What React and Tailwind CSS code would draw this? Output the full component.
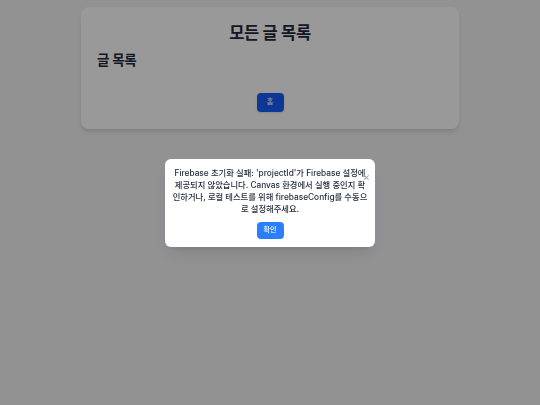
import { useState } from 'react';

const font = { fontFamily: 'Inter, "Noto Sans CJK KR", sans-serif' };

const App = () => {
    const [showError, setShowError] = useState(true);

    return (
        <div className="min-h-screen bg-gray-100 pt-[7px]" style={font}>
            <div className="w-[378px] mx-auto bg-white rounded-lg shadow-md px-[16px] pt-[14px] pb-[17px]">
                <h1 className="text-center text-[16.5px] leading-[24px] font-bold text-gray-800 tracking-[-0.3px]">
                    모든 글 목록
                </h1>
                <h2 className="mt-[5px] text-[13.5px] leading-[20px] font-semibold text-gray-800 tracking-[-0.3px]">
                    글 목록
                </h2>
                <div className="flex justify-center mt-[23px]">
                    <button className="w-[27px] h-[19px] rounded bg-blue-600 text-white text-[7px] font-medium shadow-sm">
                        홈
                    </button>
                </div>
            </div>

            {showError && (
                <div className="fixed inset-0 bg-black/40 flex items-center justify-center">
                    <div className="relative w-[210px] bg-white rounded-md shadow-lg px-[7.5px] pt-[8px] pb-[8px]">
                        <button
                            className="absolute top-[13px] right-[5px] text-gray-400 text-[11px] leading-none"
                            onClick={() => setShowError(false)}
                        >
                            ×
                        </button>
                        <p className="text-center text-[8.3px] leading-[12px] font-medium text-gray-800">
                            Firebase 초기화 실패: 'projectId'가 Firebase 설정에 제공되지 않았습니다. Canvas 환경에서 실행 중인지 확인하거나, 로컬 테스트를 위해 firebaseConfig를 수동으로 설정해주세요.
                        </p>
                        <div className="flex justify-center mt-[7px]">
                            <button
                                className="w-[27px] h-[17px] rounded bg-blue-500 text-white text-[7px] font-medium"
                                onClick={() => setShowError(false)}
                            >
                                확인
                            </button>
                        </div>
                    </div>
                </div>
            )}
        </div>
    );
};

export default App;
